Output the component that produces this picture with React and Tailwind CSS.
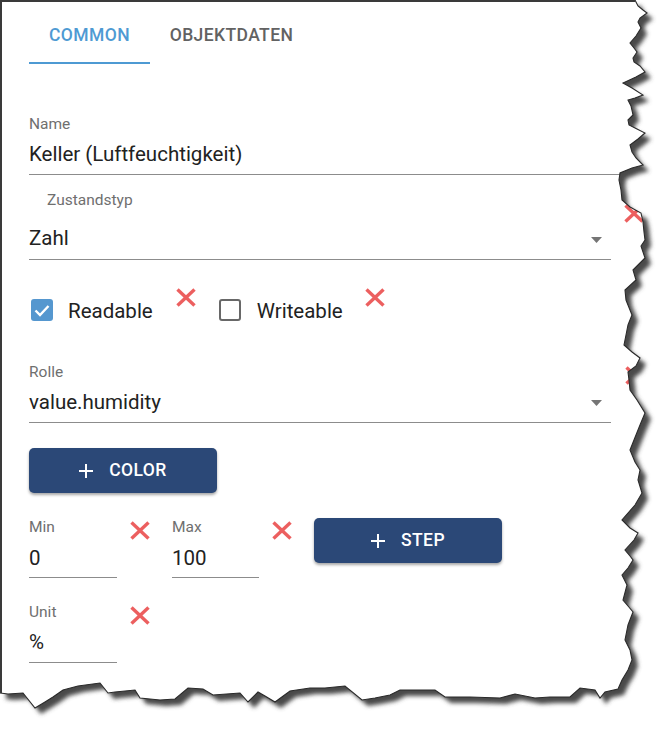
import React from "react";

const right = [[635,0],[638,6],[643,10],[647,13],[640,18],[638,22],[641,28],[636,36],[630,43],[634,48],[637,52],[633,58],[634,62],[640,66],[645,72],[636,77],[623,83],[632,88],[643,95],[635,98],[628,100],[631,106],[633,115],[628,120],[629,125],[637,129],[645,133],[638,139],[630,145],[632,152],[636,158],[643,165],[632,168],[620,173],[619,180],[621,190],[622,200],[630,207],[641,213],[643,222],[644,232],[645,240],[641,246],[645,258],[640,263],[633,270],[636,280],[625,290],[626,300],[632,315],[628,325],[626,335],[624,345],[632,352],[640,358],[636,366],[628,372],[629,380],[630,390],[637,400],[645,413],[640,425],[634,440],[630,450],[635,462],[640,470],[638,480],[642,493],[635,505],[622,520],[630,528],[638,533],[634,540],[625,550],[630,556],[633,560],[628,568],[622,575],[627,585],[623,600],[628,606],[633,612],[628,625],[625,640],[630,650],[632,660],[628,670],[622,680],[618,689]];
const bottom = [[605,692],[600,698],[595,690],[580,688],[570,697],[550,697],[535,698],[515,694],[500,698],[470,697],[445,697],[435,690],[400,690],[390,695],[375,698],[362,700],[345,686],[325,688],[310,688],[290,691],[275,702],[265,696],[258,692],[248,702],[240,693],[213,695],[203,689],[188,688],[175,699],[160,700],[140,698],[135,690],[115,692],[108,693],[100,683],[78,686],[63,690],[53,697],[45,702],[35,708],[23,693],[8,694],[0,693]];
const edge = [...right, ...bottom];
const pts = edge.map((p) => p.join(",")).join(" L");
const paper = `M0,0 L${pts} Z`;
const outside = `M${pts} L0,729 L668,729 L668,0 Z`;

function TornEdge() {
  return (
    <svg className="absolute inset-0 pointer-events-none" width="668" height="729" viewBox="0 0 668 729">
      <defs>
        <filter id="sh" x="-10%" y="-10%" width="120%" height="120%">
          <feGaussianBlur stdDeviation="2.2" />
        </filter>
        <clipPath id="out">
          <path d={outside} />
        </clipPath>
      </defs>
      <path d={outside} fill="#ffffff" />
      <g clipPath="url(#out)">
        <path d={paper} transform="translate(6,6)" fill="#4a4a4a" filter="url(#sh)" />
      </g>
      <path d={`M${pts}`} fill="none" stroke="#2a2a2a" strokeWidth="1.1" />
      <line x1="1" y1="0" x2="1" y2="693" stroke="#3a3a3a" strokeWidth="2" />
      <line x1="0" y1="1" x2="635" y2="1" stroke="#3a3a3a" strokeWidth="2" />
    </svg>
  );
}

function RedX() {
  return (
    <svg width="20" height="19" viewBox="0 0 20 19" className="block">
      <line x1="1.5" y1="1.5" x2="18.5" y2="17.5" stroke="#ec5f5f" strokeWidth="3.4" />
      <line x1="18.5" y1="1.5" x2="1.5" y2="17.5" stroke="#ec5f5f" strokeWidth="3.4" />
    </svg>
  );
}

function Arrow() {
  return (
    <svg width="11" height="6" viewBox="0 0 11 6" className="block">
      <polygon points="0,0 11,0 5.5,6" fill="#757575" />
    </svg>
  );
}

function Plus() {
  return (
    <svg width="14" height="14" viewBox="0 0 14 14" className="block">
      <line x1="7" y1="0" x2="7" y2="14" stroke="#ffffff" strokeWidth="2" />
      <line x1="0" y1="7" x2="14" y2="7" stroke="#ffffff" strokeWidth="2" />
    </svg>
  );
}

function Button({ label }) {
  return (
    <div className="w-[188px] h-[45px] rounded-[5px] bg-[#2b4877] shadow-[0_2px_3px_rgba(0,0,0,0.35)] flex items-center justify-center gap-[16px] text-white font-medium text-[17.5px] tracking-[0.4px]">
      <Plus />
      <span>{label}</span>
    </div>
  );
}

export default function App() {
  return (
    <div className="relative w-[668px] h-[729px] overflow-hidden bg-white font-['Roboto',sans-serif]">
      {/* Tabs */}
      <div className="flex pl-[29px] pt-[9px]">
        <div className="w-[121px] flex flex-col">
          <div className="h-[53px] flex items-center justify-center text-[17.5px] font-medium tracking-[0.4px] text-[#4e9ad3]">COMMON</div>
          <div className="h-[2px] bg-[#4e9ad3]" />
        </div>
        <div className="w-[163px] flex flex-col">
          <div className="h-[53px] flex items-center justify-center text-[17.5px] font-medium tracking-[0.4px] text-[#626262]">OBJEKTDATEN</div>
        </div>
      </div>

      <div className="pl-[29px]">
        {/* Name */}
        <div className="mt-[51px] w-[620px] border-b border-[#8c8c8c] pb-[7px]">
          <div className="h-[18px] leading-[18px] text-[15.5px] text-[#6f6f6f]">Name</div>
          <div className="mt-[8px] h-[26px] leading-[26px] text-[20.5px] text-[#222]">Keller (Luftfeuchtigkeit)</div>
        </div>

        {/* Zustandstyp */}
        <div className="flex items-start">
          <div className="w-[582px] border-b border-[#8c8c8c] pb-[8px]">
            <div className="mt-[16px] pl-[18px] h-[18px] leading-[18px] text-[15.5px] text-[#6f6f6f]">Zustandstyp</div>
            <div className="mt-[16px] h-[26px] leading-[26px] text-[20.5px] text-[#222] flex items-center justify-between">
              <span>Zahl</span>
              <span className="mr-[9px] mt-[4px]"><Arrow /></span>
            </div>
          </div>
          <div className="ml-[13px] mt-[29px]"><RedX /></div>
        </div>

        {/* Checkboxes */}
        <div className="mt-[26px] flex items-start h-[40px]">
          <div className="ml-[2px] mt-[13px] w-[22px] h-[22px] rounded-[3px] bg-[#5597cf] flex items-center justify-center">
            <svg width="16" height="13" viewBox="0 0 16 13"><polyline points="1.5,6.5 6,11 14.5,2" fill="none" stroke="#fff" strokeWidth="2.4" /></svg>
          </div>
          <div className="ml-[15px] mt-[12px] h-[26px] leading-[26px] text-[20.5px] text-[#222]">Readable</div>
          <div className="ml-[23px] mt-[2px]"><RedX /></div>
          <div className="ml-[23px] mt-[13px] w-[22px] h-[22px] rounded-[3px] border-[2.5px] border-[#686868]" />
          <div className="ml-[16px] mt-[12px] h-[26px] leading-[26px] text-[20.5px] text-[#222]">Writeable</div>
          <div className="ml-[22px] mt-[2px]"><RedX /></div>
        </div>

        {/* Rolle */}
        <div className="mt-[37px] flex items-start">
          <div className="w-[582px] border-b border-[#8c8c8c] pb-[7px]">
            <div className="h-[18px] leading-[18px] text-[15.5px] text-[#6f6f6f]">Rolle</div>
            <div className="mt-[8px] h-[26px] leading-[26px] text-[20.5px] text-[#222] flex items-center justify-between">
              <span>value.humidity</span>
              <span className="mr-[9px] mt-[2px]"><Arrow /></span>
            </div>
          </div>
          <div className="ml-[14px] mt-[3px]"><RedX /></div>
        </div>

        {/* Color button */}
        <div className="mt-[25px]">
          <Button label="COLOR" />
        </div>

        {/* Min / Max / Step */}
        <div className="mt-[25px] flex items-start">
          <div className="w-[88px] border-b border-[#8c8c8c] pb-[6px]">
            <div className="h-[18px] leading-[18px] text-[15.5px] text-[#6f6f6f]">Min</div>
            <div className="mt-[9px] h-[26px] leading-[26px] text-[20.5px] text-[#222]">0</div>
          </div>
          <div className="ml-[13px] mt-[3px]"><RedX /></div>
          <div className="ml-[22px] w-[87px] border-b border-[#8c8c8c] pb-[6px]">
            <div className="h-[18px] leading-[18px] text-[15.5px] text-[#6f6f6f]">Max</div>
            <div className="mt-[9px] h-[26px] leading-[26px] text-[20.5px] text-[#222]">100</div>
          </div>
          <div className="ml-[13px] mt-[3px]"><RedX /></div>
          <div className="ml-[22px]">
            <Button label="STEP" />
          </div>
        </div>

        {/* Unit */}
        <div className="mt-[25px] flex items-start">
          <div className="w-[88px] border-b border-[#8c8c8c] pb-[7px]">
            <div className="h-[18px] leading-[18px] text-[15.5px] text-[#6f6f6f]">Unit</div>
            <div className="mt-[8px] h-[26px] leading-[26px] text-[20.5px] text-[#222]">%</div>
          </div>
          <div className="ml-[13px] mt-[3px]"><RedX /></div>
        </div>
      </div>

      <TornEdge />
    </div>
  );
}
